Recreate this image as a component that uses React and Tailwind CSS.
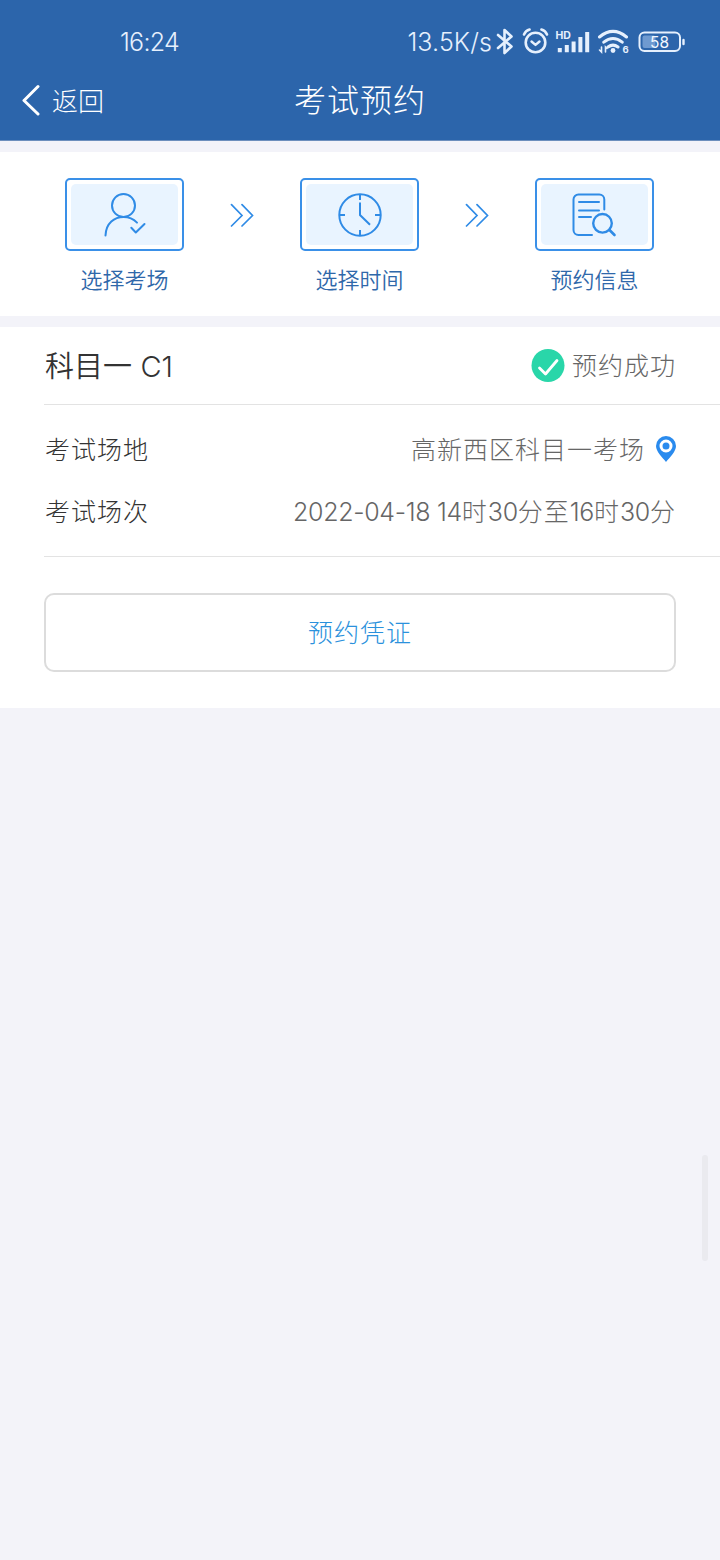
const BLUE = "#2f8be6";

function StatusIcons() {
  return (
    <svg className="mb-[4px] h-[30px] w-[190px] shrink-0 tracking-normal" viewBox="495 27 190 30" fill="none" stroke="#e6f0fd" strokeLinecap="round">
      <path d="M498 36l13.5 11.5-7 6.5V31l7 6.5L498 49" strokeWidth="2.6" strokeLinejoin="round" />
      <circle cx="535.5" cy="43.5" r="9.8" strokeWidth="2.6" />
      <path d="M531.5 42.5l4 3.4 4-3.4" strokeWidth="2.4" strokeLinejoin="round" />
      <path d="M524 35.5q1.6-3.8 5.6-4.9M547 35.5q-1.6-3.8-5.6-4.9" strokeWidth="2.6" />
      <path d="M559.8 49v4.2M566.8 46v7.2M573.6 42.5v10.700M580.4 38v15.200M587.2 33v20.200" strokeWidth="4" strokeLinecap="butt" />
      <text x="555.5" y="40" fill="#e6f0fd" stroke="none" fontFamily="Inter, sans-serif" fontSize="10.5" fontWeight="700">HD</text>
      <path d="M599.5 38q13.5-11.2 27 0M603.8 43.2q9.2-7.4 18.4 0M608 48q5-3.8 10 0" strokeWidth="3" />
      <circle cx="613" cy="51.5" r="2.4" fill="#e6f0fd" stroke="none" />
      <path d="M601.5 48v5l-2-2M605.5 53v-5l1.5 1.5" strokeWidth="1.6" />
      <text x="622.5" y="54" fill="#e6f0fd" stroke="none" fontFamily="Inter, sans-serif" fontSize="9.5" fontWeight="700">6</text>
      <rect x="639.5" y="33.5" width="40.5" height="18.5" rx="5" strokeWidth="2" />
      <rect x="642.5" y="36.5" width="13" height="12.5" rx="2" fill="#6f9ad0" stroke="none" />
      <path d="M683.5 41v4" strokeWidth="2.4" />
      <text x="659.5" y="48.5" textAnchor="middle" fill="#f2f7ff" stroke="none" fontFamily="Inter, sans-serif" fontSize="15.5" fontWeight="400">58</text>
    </svg>
  );
}

function UserIcon() {
  return (
    <svg className="mr-0.5 h-12 w-12" viewBox="0 0 48 48" fill="none" stroke={BLUE} strokeWidth="2" strokeLinecap="round">
      <circle cx="23.5" cy="14.5" r="11.5" />
      <path d="M5.5 44.5C6 32 14.5 26 23.5 26q8 0 13.5 5.6" />
      <path d="M31.3 36.8l4.5 4.7 8.7-8.5" strokeLinejoin="round" />
    </svg>
  );
}

function ClockIcon() {
  return (
    <svg className="h-12 w-12" viewBox="0 0 48 48" fill="none" stroke={BLUE} strokeWidth="2">
      <circle cx="24" cy="24" r="20.7" />
      <path d="M24 4v5M24 39v5M4 24h5M39 24h5M24 11.5V24l10 9.8" />
    </svg>
  );
}

function RecordIcon() {
  return (
    <svg className="mr-0.5 h-12 w-12" viewBox="0 0 48 48" fill="none" stroke={BLUE} strokeWidth="2" strokeLinecap="round">
      <path d="M34.3 18.5V8.5a5 5 0 0 0-5-5H8.5a5 5 0 0 0-5 5V39a5 5 0 0 0 5 5H22" />
      <path d="M9 11h20M9 19.5h20M9 26h12" />
      <circle cx="32.5" cy="32.3" r="9.3" strokeWidth="2.4" />
      <path d="M39.5 39l5 5" strokeWidth="2.6" />
    </svg>
  );
}

function StepArrow() {
  return (
    <svg className="mt-[25px] h-6 w-6" viewBox="0 0 24 24" fill="none" stroke={BLUE} strokeWidth="1.7" strokeLinecap="round">
      <path d="M1.5 1.7L12 12.5 1.5 23M12 1.7L22.5 12.5 12 23" />
    </svg>
  );
}

function Step({ label, children }) {
  return (
    <div className="flex w-[119px] flex-col items-center">
      <div className="h-[73px] w-full rounded-[5px] border-2 border-[#3a90e8] bg-white p-1">
        <div className="flex h-full items-center justify-center rounded-[5px] bg-[#e9f4ff]">{children}</div>
      </div>
      <span className="mt-[11px] text-[22px] leading-8 font-[350] text-[#2f68aa]">{label}</span>
    </div>
  );
}

function Num({ children }) {
  return <span className="font-['Inter'] tracking-[-0.013em]">{children}</span>;
}

export default function App() {
  return (
    <div className="relative min-h-[1560px] w-[720px] bg-[#f3f3f9] font-['Noto_Sans_CJK_SC',sans-serif] font-light">
      <header className="h-[141px] border-b border-[#6d8fbd] bg-[#2c65ab] text-white">
        <div className="flex h-[60px] items-end justify-between pr-[35px] pl-[120px] font-['Inter'] text-[25px] leading-9 tracking-[-0.03em] text-[#e6f0fd]">
          <span>16:24</span>
          <div className="flex items-end">
            <span className="mr-[3px] tracking-[0.005em]">13.5K/s</span>
            <StatusIcons />
          </div>
        </div>
        <div className="grid h-20 grid-cols-3 items-center">
          <div className="flex items-center pl-[21px]">
            <svg className="h-8 w-5" viewBox="0 0 20 32" fill="none" stroke="currentColor" strokeWidth="3" strokeLinecap="round" strokeLinejoin="round">
              <path d="M17 2.5L3 16.5l14 13.5" />
            </svg>
            <span className="ml-[11px] text-[26px] leading-9">返回</span>
          </div>
          <h1 className="pb-1 text-center text-[32px] leading-10 tracking-[1px]">考试预约</h1>
        </div>
      </header>

      <section className="mt-[11px] flex h-[164px] items-start justify-between bg-white pt-[26px] pr-[66px] pl-[65px]">
        <Step label="选择考场"><UserIcon /></Step>
        <StepArrow />
        <Step label="选择时间"><ClockIcon /></Step>
        <StepArrow />
        <Step label="预约信息"><RecordIcon /></Step>
      </section>

      <main className="mt-[11px] h-[381px] bg-white pl-11">
        <div className="flex h-[78px] items-center justify-between border-b border-[#e3e3e3] pr-11">
          <h2 className="pl-px text-[29px] leading-10 font-[350] text-[#333]">
            科目一 <span className="ml-0.5 font-['Inter']">C1</span>
          </h2>
          <div className="flex items-center text-[25px] tracking-[1px] text-[#666]">
            <svg className="mr-[7px] h-[34px] w-[34px]" viewBox="0 0 34 34" fill="none">
              <circle cx="17" cy="16.5" r="16.5" fill="#29d6a9" />
              <path d="M8.5 19l6 6L26 11.5" stroke="#fff" strokeWidth="2.8" strokeLinecap="round" strokeLinejoin="round" />
            </svg>
            <span className="pb-0.5">预约成功</span>
          </div>
        </div>

        <div className="h-[152px] border-b border-[#e3e3e3] pt-[13px] pr-11 text-[25px] tracking-[1px]">
          <div className="flex h-[62px] items-center justify-between">
            <span className="pl-px text-[#333]">考试场地</span>
            <div className="flex items-center text-[#666]">
              <span>高新西区科目一考场</span>
              <svg className="ml-[11px] h-[26px] w-5" viewBox="0 0 20 26">
                <path d="M10 0a10 10 0 0 0-10 10c0 5.5 6 11 10 16 4-5 10-10.5 10-16A10 10 0 0 0 10 0z" fill="#2a8bee" />
                <circle cx="10" cy="10" r="5" fill="none" stroke="#fff" strokeWidth="3" />
              </svg>
            </div>
          </div>
          <div className="flex h-[62px] items-center justify-between">
            <span className="pl-px text-[#333]">考试场次</span>
            <span className="pt-px text-[#666]">
              <Num>2022-04-18 14</Num>时<Num>30</Num>分至<Num>16</Num>时<Num>30</Num>分
            </span>
          </div>
        </div>

        <div className="pt-9 pr-11">
          <button className="h-[79px] w-full rounded-[10px] border-2 border-[#dcdcdc] pb-0.5 text-[25px] tracking-[1px] text-[#2b91dc]">
            预约凭证
          </button>
        </div>
      </main>

      {/* scroll thumb */}
      <div className="absolute top-[1155px] right-3 h-[106px] w-1.5 rounded-sm bg-[#eaeaef]" />
    </div>
  );
}
